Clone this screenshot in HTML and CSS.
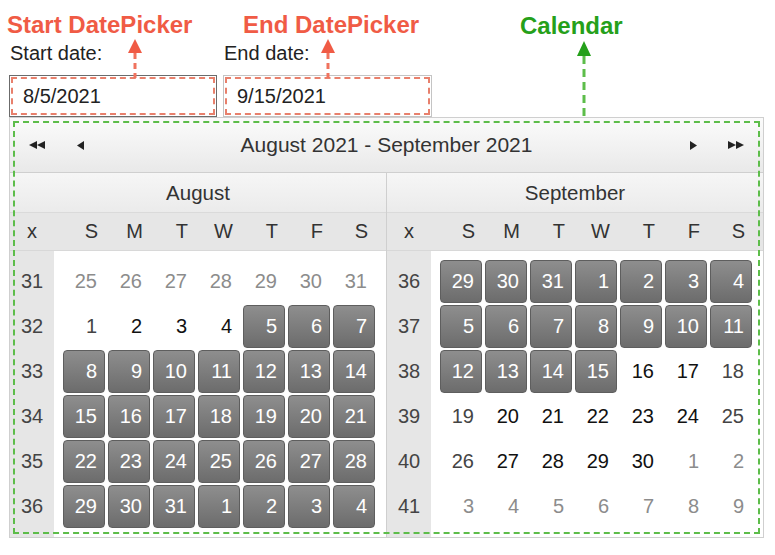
FILE: index.html
```html
<!DOCTYPE html>
<html lang="en">
  <head>
    <meta charset="UTF-8" />
    <title>Calendar range</title>
    <link rel="stylesheet" href="styles.css">
  </head>
  <body>
    <div class="page">
      <!-- annotations -->
      <div class="note note-start">Start DatePicker</div>
      <div class="note note-end">End DatePicker</div>
      <div class="note note-cal">Calendar</div>
      <svg class="arrow arrow-start" width="14" height="39" viewBox="0 0 14 39">
        <polygon points="7,0 14,14 0,14" fill="#f05b45"></polygon>
        <line x1="7" y1="14" x2="7" y2="39" stroke="#f0735e" stroke-width="3" stroke-dasharray="6 4"></line>
      </svg>
      <svg class="arrow arrow-end" width="14" height="39" viewBox="0 0 14 39">
        <polygon points="7,0 14,14 0,14" fill="#f05b45"></polygon>
        <line x1="7" y1="14" x2="7" y2="39" stroke="#f0735e" stroke-width="3" stroke-dasharray="6 4"></line>
      </svg>
      <svg class="arrow arrow-cal" width="14" height="81" viewBox="0 0 14 81">
        <polygon points="7,0 14,15 0,15" fill="#25a01a"></polygon>
        <line x1="7" y1="15" x2="7" y2="81" stroke="#5dbd4a" stroke-width="3" stroke-dasharray="8 5"></line>
      </svg>

      <div class="pickers">
        <div class="field">
          <div class="field-label">Start date:</div>
          <div class="input input-active">8/5/2021</div>
        </div>
        <div class="field field-end">
          <div class="field-label">End date:</div>
          <div class="input">9/15/2021</div>
        </div>
      </div>

      <div class="calendar">
        <div class="cal-nav">
          <span class="nav-btn">
            <svg width="16" height="8" viewBox="0 0 16 8"><polygon points="0,4 8,0 8,8"></polygon><polygon points="8,4 16,0 16,8"></polygon></svg>
          </span>
          <span class="nav-btn">
            <svg width="7" height="9" viewBox="0 0 7 9"><polygon points="0,4.5 7,0 7,9"></polygon></svg>
          </span>
          <span class="nav-title">August 2021 - September 2021</span>
          <span class="nav-btn">
            <svg width="7" height="9" viewBox="0 0 7 9"><polygon points="7,4.5 0,0 0,9"></polygon></svg>
          </span>
          <span class="nav-btn">
            <svg width="16" height="8" viewBox="0 0 16 8"><polygon points="8,4 0,0 0,8"></polygon><polygon points="16,4 8,0 8,8"></polygon></svg>
          </span>
        </div>

        <div class="months">
          <div class="month">
            <div class="month-title">August</div>
            <div class="weekdays">
              <span class="wk-x">x</span>
              <div class="wd-cells"><span>S</span><span>M</span><span>T</span><span>W</span><span>T</span><span>F</span><span>S</span></div>
            </div>
            <div class="month-body">
              <div class="weeknums"><span>31</span><span>32</span><span>33</span><span>34</span><span>35</span><span>36</span></div>
              <div class="days">
                <span class="day other">25</span><span class="day other">26</span><span class="day other">27</span><span class="day other">28</span><span class="day other">29</span><span class="day other">30</span><span class="day other">31</span>
                <span class="day wkend">1</span><span class="day">2</span><span class="day">3</span><span class="day">4</span><span class="day sel">5</span><span class="day sel">6</span><span class="day sel">7</span>
                <span class="day sel">8</span><span class="day sel">9</span><span class="day sel">10</span><span class="day sel">11</span><span class="day sel">12</span><span class="day sel">13</span><span class="day sel">14</span>
                <span class="day sel">15</span><span class="day sel">16</span><span class="day sel">17</span><span class="day sel">18</span><span class="day sel">19</span><span class="day sel">20</span><span class="day sel">21</span>
                <span class="day sel">22</span><span class="day sel">23</span><span class="day sel">24</span><span class="day sel">25</span><span class="day sel">26</span><span class="day sel">27</span><span class="day sel">28</span>
                <span class="day sel">29</span><span class="day sel">30</span><span class="day sel">31</span><span class="day sel">1</span><span class="day sel">2</span><span class="day sel">3</span><span class="day sel">4</span>
              </div>
            </div>
          </div>

          <div class="month">
            <div class="month-title">September</div>
            <div class="weekdays">
              <span class="wk-x">x</span>
              <div class="wd-cells"><span>S</span><span>M</span><span>T</span><span>W</span><span>T</span><span>F</span><span>S</span></div>
            </div>
            <div class="month-body">
              <div class="weeknums"><span>36</span><span>37</span><span>38</span><span>39</span><span>40</span><span>41</span></div>
              <div class="days">
                <span class="day sel">29</span><span class="day sel">30</span><span class="day sel">31</span><span class="day sel">1</span><span class="day sel">2</span><span class="day sel">3</span><span class="day sel">4</span>
                <span class="day sel">5</span><span class="day sel">6</span><span class="day sel">7</span><span class="day sel">8</span><span class="day sel">9</span><span class="day sel">10</span><span class="day sel">11</span>
                <span class="day sel">12</span><span class="day sel">13</span><span class="day sel">14</span><span class="day sel">15</span><span class="day">16</span><span class="day">17</span><span class="day wkend">18</span>
                <span class="day wkend">19</span><span class="day">20</span><span class="day">21</span><span class="day">22</span><span class="day">23</span><span class="day">24</span><span class="day wkend">25</span>
                <span class="day wkend">26</span><span class="day">27</span><span class="day">28</span><span class="day">29</span><span class="day">30</span><span class="day other">1</span><span class="day other">2</span>
                <span class="day other">3</span><span class="day other">4</span><span class="day other">5</span><span class="day other">6</span><span class="day other">7</span><span class="day other">8</span><span class="day other">9</span>
              </div>
            </div>
          </div>
        </div>
      </div>
    </div>
  </body>
</html>
```

FILE: styles.css
```css
:root {
  --note-red: #f05b45;
  --note-green: #25a01a;
  --border: #cfcfcf;
  --strip: #e6e6e6;
}
body {
  margin: 0;
  font-family: "Liberation Sans", Arial, sans-serif;
  color: #222;
  background: #fff;
}
.page {
  position: relative;
  padding: 41px 0 0 9px;
  width: 756px;
}

/* annotation overlay */
.note {
  position: absolute;
  top: 11px;
  font-size: 24px;
  font-weight: 700;
  line-height: 28px;
  color: var(--note-red);
}
.note-start { left: 7px; }
.note-end { left: 243px; }
.note-cal { left: 520px; color: var(--note-green); top: 12px; }
.arrow {
  position: absolute;
}
.arrow-start { left: 128px; top: 39px; }
.arrow-end { left: 321px; top: 39px; }
.arrow-cal { left: 577px; top: 41px; }

/* date pickers */
.pickers {
  display: flex;
  gap: 6px;
}
.field {
  width: 208px;
}
.field-end {
  width: 209px;
}
.field-label {
  height: 34px;
  font-size: 20px;
  line-height: 24px;
  padding-left: 1px;
}
.input {
  height: 40px;
  border: 1px solid #c4c4c4;
  padding-left: 13px;
  font-size: 20px;
  line-height: 40px;
  color: #222;
  outline: 2px dashed #e8806c;
  outline-offset: -4px;
}
.input-active {
  border-color: #6b6b6b;
}

/* calendar */
.calendar {
  position: relative;
  width: 753px;
  border: 1px solid var(--border);
  color: #333;
}
.calendar::after {
  content: "";
  position: absolute;
  inset: 3px;
  border: 2px dashed #5dbd4a;
  pointer-events: none;
}
.cal-nav {
  display: flex;
  align-items: center;
  height: 54px;
  padding: 0 14px;
  background: linear-gradient(#fbfbfb, #e9e9e9);
  border-bottom: 1px solid var(--border);
}
.nav-btn {
  width: 26px;
  display: flex;
  justify-content: center;
  align-items: center;
}
.nav-btn + .nav-btn {
  margin-left: 17px;
}
.nav-btn svg {
  fill: #222;
}
.nav-title {
  flex: 1;
  text-align: center;
  font-size: 21px;
}
.months {
  display: flex;
}
.month {
  width: 376px;
}
.month + .month {
  border-left: 1px solid var(--border);
}
.month-title {
  height: 39px;
  line-height: 39px;
  text-align: center;
  font-size: 20.5px;
  background: linear-gradient(#f6f6f6, #ebebeb);
  border-bottom: 1px solid #dadada;
}
.weekdays {
  display: flex;
  height: 37px;
  line-height: 37px;
  font-size: 20px;
  background: var(--strip);
  border-bottom: 1px solid #d8d8d8;
}
.wk-x {
  width: 44px;
  text-align: center;
}
.wd-cells {
  display: grid;
  grid-template-columns: repeat(7, 45px);
  padding-left: 8px;
}
.wd-cells span {
  text-align: right;
  padding-right: 9px;
}
.month-body {
  display: flex;
}
.weeknums {
  width: 44px;
  padding: 8px 0;
  background: var(--strip);
  display: flex;
  flex-direction: column;
}
.weeknums span {
  height: 45px;
  line-height: 45px;
  text-align: center;
  font-size: 20px;
  color: #444;
}
.days {
  display: grid;
  grid-template-columns: repeat(7, 45px);
  grid-auto-rows: 45px;
  padding: 8px 9px 8px 8px;
}
.day {
  margin: 1px 2px 1px 1px;
  border: 1px solid transparent;
  border-radius: 4px;
  padding-right: 7px;
  text-align: right;
  font-size: 20px;
  line-height: 41px;
  color: #111;
}
.day.wkend {
  color: #444;
}
.day.other {
  color: #8c8c8c;
}
.day.sel {
  color: #fff;
  background: linear-gradient(#8e8e8e, #6c6c6c);
  border-color: #5e5e5e;
}
```
